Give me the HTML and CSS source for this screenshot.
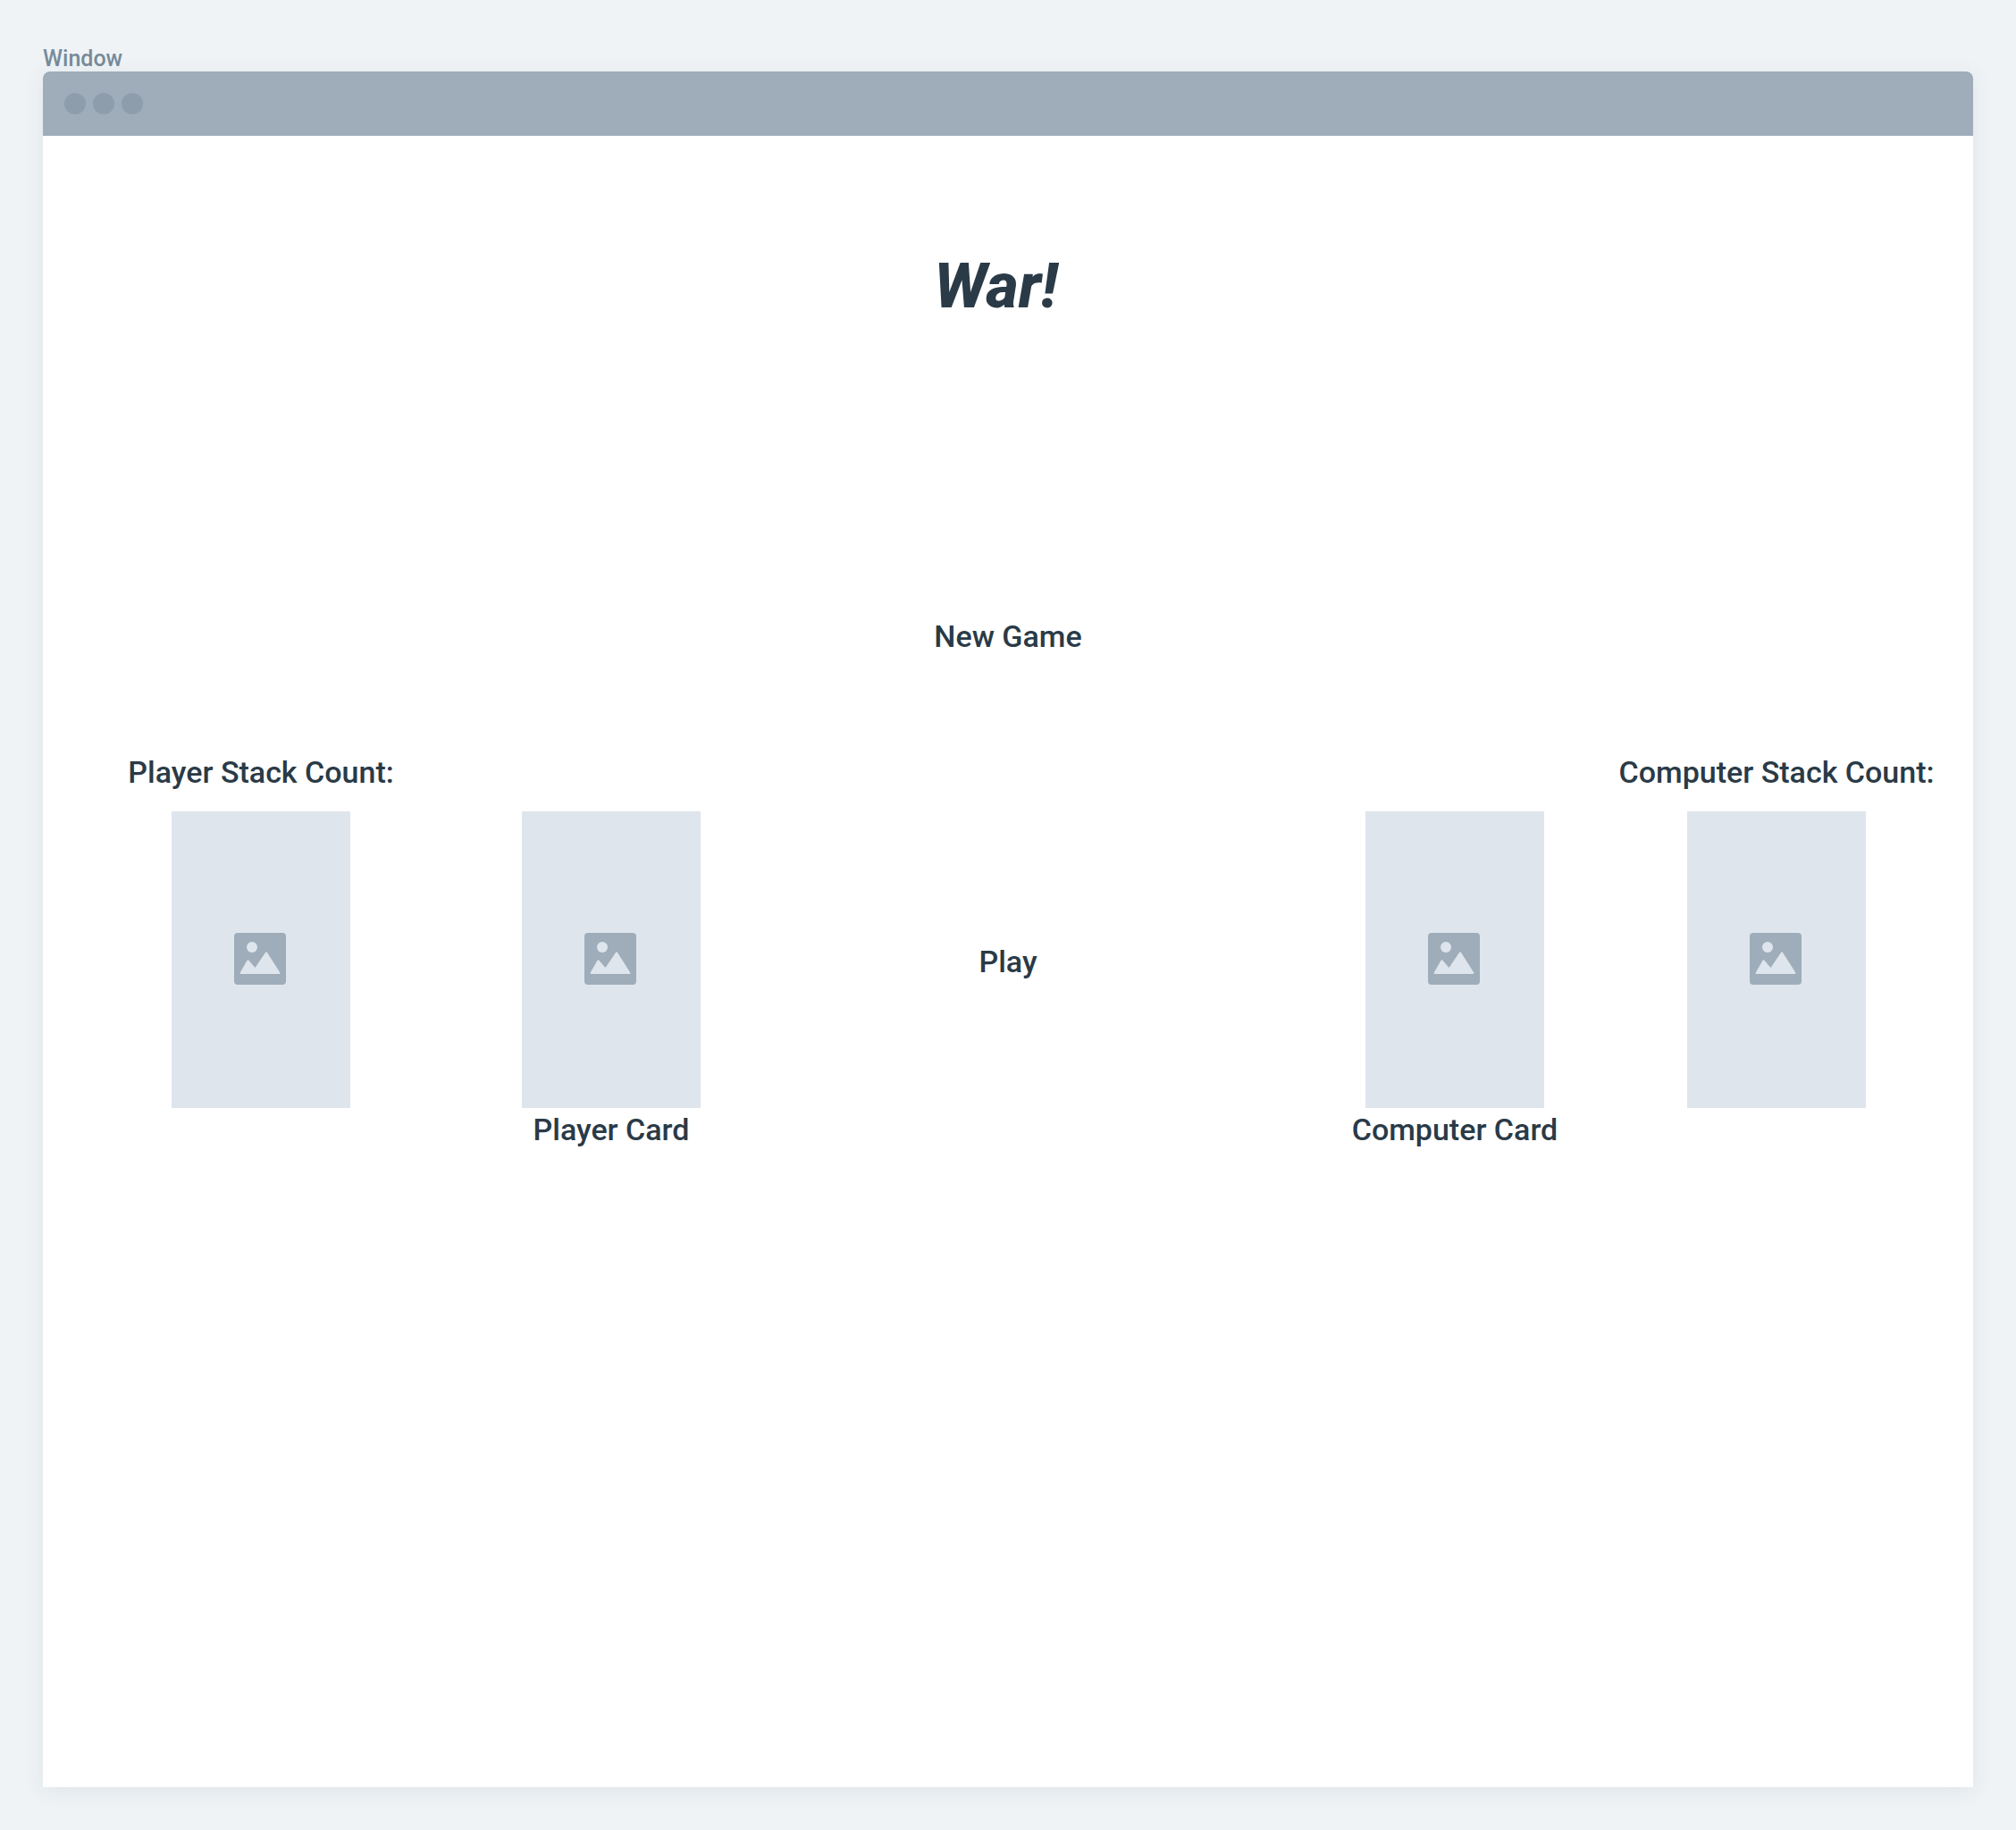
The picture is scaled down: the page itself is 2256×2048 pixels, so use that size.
FILE: index.html
```html
<!DOCTYPE html>
<html lang="en">
<head>
  <meta charset="utf-8">
  <meta name="viewport" content="width=device-width, initial-scale=1">
  <title>War!</title>
  <link rel="stylesheet" href="styles.css">
</head>
<body>
  <svg class="symbols" aria-hidden="true">
    <symbol id="picture" viewBox="0 0 60 60">
      <rect class="picture-frame" width="58" height="58" rx="4"/>
      <circle class="picture-shape" cx="20" cy="16" r="6"/>
      <path class="picture-shape" d="M7 44 14.600 30.800Q15.500 29.500 16.400 30.800L23.500 39 35 22Q36 20.500 37 22L51 44Q52 46 50.500 46H7.500Q6 46 7 44Z"/>
    </symbol>
  </svg>

  <div class="window-label">Window</div>
  <div class="window">
    <div class="title-bar">
      <span class="dot"></span>
      <span class="dot"></span>
      <span class="dot"></span>
    </div>
    <main class="game">
      <header class="intro">
        <h1 class="title">War!</h1>
        <button class="action" type="button">New Game</button>
      </header>
      <section class="table">
        <div class="slot">
          <h2 class="label">Player Stack Count:</h2>
          <div class="card"><svg class="icon" role="img" aria-label="Player stack"><use href="#picture"/></svg></div>
        </div>
        <figure class="slot played">
          <div class="card"><svg class="icon" aria-hidden="true"><use href="#picture"/></svg></div>
          <figcaption class="label">Player Card</figcaption>
        </figure>
        <div class="slot played">
          <div class="play-area"><button class="action" type="button">Play</button></div>
        </div>
        <figure class="slot played">
          <div class="card"><svg class="icon" aria-hidden="true"><use href="#picture"/></svg></div>
          <figcaption class="label">Computer Card</figcaption>
        </figure>
        <div class="slot">
          <h2 class="label">Computer Stack Count:</h2>
          <div class="card"><svg class="icon" role="img" aria-label="Computer stack"><use href="#picture"/></svg></div>
        </div>
      </section>
    </main>
  </div>
</body>
</html>
```
FILE: styles.css
```css
* {
  box-sizing: border-box;
}

body {
  display: flex;
  flex-direction: column;
  min-height: 100vh;
  margin: 0;
  padding: 52px 48px 48px;
  background: #eff3f6;
  color: #2a3a47;
  font-family: Roboto, "Liberation Sans", sans-serif;
}

.symbols {
  position: absolute;
  width: 0;
  height: 0;
}

.window-label {
  color: #788b9a;
  font-size: 25px;
  font-weight: 500;
  line-height: 28px;
}

.window {
  flex: 1;
  border-radius: 8px 8px 0 0;
  background: #fff;
  box-shadow: 0 4px 24px rgba(42, 58, 71, 0.08);
}

.title-bar {
  display: flex;
  align-items: center;
  gap: 8px;
  height: 72px;
  padding: 0 24px;
  border-radius: 8px 8px 0 0;
  background: #9eadb9;
}

.dot {
  width: 24px;
  height: 24px;
  border-radius: 50%;
  background: #8e9dac;
}

.game {
  padding-top: 128px;
}

.intro {
  display: flex;
  flex-direction: column;
  align-items: flex-start;
  gap: 328px;
  width: fit-content;
  margin: 0 auto;
}

.title {
  margin: 0;
  font-size: 70px;
  font-style: italic;
  font-weight: 800;
  line-height: 80px;
}

.action,
.label {
  margin: 0;
  color: inherit;
  font-family: inherit;
  font-size: 34px;
  font-weight: 500;
  line-height: 48px;
  white-space: nowrap;
}

.action {
  padding: 0;
  border: 0;
  background: none;
  cursor: pointer;
}

.table {
  display: grid;
  grid-template-columns:
    minmax(0, 61fr) minmax(0, 37fr) minmax(0, 74fr)
    minmax(0, 51fr) minmax(0, 39fr);
  margin-top: 104px;
  padding-right: 64px;
}

.slot {
  display: flex;
  flex-direction: column;
  align-items: center;
  gap: 20px;
  margin: 0;
}

.played {
  gap: 0;
  padding-top: 68px;
}

.card {
  display: flex;
  align-items: center;
  justify-content: center;
  width: 200px;
  height: 332px;
  background: #dfe5ed;
}

.play-area {
  display: flex;
  align-items: center;
  height: 336px;
}

.icon {
  width: 60px;
  height: 60px;
}

.picture-frame {
  fill: #9eadb9;
}

.picture-shape {
  fill: #dfe5ed;
}
```
